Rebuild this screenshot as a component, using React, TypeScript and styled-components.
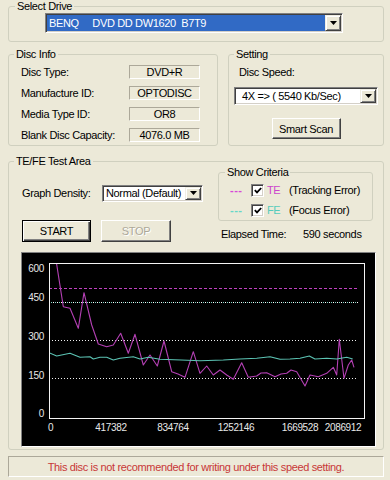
import React from "react";
import styled, { createGlobalStyle } from "styled-components";

const GlobalStyle = createGlobalStyle`
  html, body { margin: 0; padding: 0; background: #ECE9D8; }
  body { font-family: "Liberation Sans", Arial, sans-serif; font-size: 11px; color: #000; }
  * { box-sizing: border-box; }
`;

const Window = styled.div`
  width: 390px;
  height: 480px;
  padding: 0 6px 0 8px;
  display: flex;
  flex-direction: column;
  overflow: hidden;
  background: #ECE9D8;
  font-family: "Liberation Sans", Arial, sans-serif;
  font-size: 11px;
  letter-spacing: -0.35px;
  color: #000;
`;

const Group = styled.fieldset<{ $width?: number; $mt?: number }>`
  margin: ${(p) => p.$mt ?? 0}px 0 0 0;
  padding: 0;
  min-width: 0;
  border: 1px solid #D0D0BF;
  border-radius: 3px;
  ${(p) => (p.$width ? `width: ${p.$width}px; flex: none;` : "")}
`;

const GroupBody = styled.div<{ $pad: string }>`
  padding: ${(p) => p.$pad};
  display: flex;
  flex-direction: column;
`;

const Title = styled.legend<{ $indent?: number }>`
  margin-left: ${(p) => p.$indent ?? 5}px;
  padding: 0 2px;
  line-height: 13px;
  height: 13px;
  font-size: 11px;
`;

const ComboBox = styled.div<{ $w: number; $h: number }>`
  width: ${(p) => p.$w}px;
  height: ${(p) => p.$h}px;
  display: flex;
  flex: none;
  background: #fff;
  border: 1px solid;
  border-color: #808080 #fff #fff #808080;
  box-shadow: inset 1px 1px 0 #404040, inset -1px -1px 0 #D4D0C8;
  padding: 1px;
`;

const ComboText = styled.div<{ $selected?: boolean; $indent?: number }>`
  flex: 1;
  display: flex;
  align-items: center;
  padding-left: ${(p) => p.$indent ?? 2}px;
  white-space: pre;
  overflow: hidden;
  background: ${(p) => (p.$selected ? "#316AC5" : "#fff")};
  color: ${(p) => (p.$selected ? "#fff" : "#000")};
`;

const DropBtn = styled.div`
  width: 16px;
  flex: none;
  display: flex;
  align-items: center;
  justify-content: center;
  background: #ECE9D8;
  border: 1px solid;
  border-color: #F0EEE4 #404040 #404040 #F0EEE4;
  box-shadow: inset 1px 1px 0 #fff, inset -1px -1px 0 #808080;
`;

const Arrow = () => (
  <svg width="7" height="4" viewBox="0 0 7 4">
    <polygon points="0,0 7,0 3.5,4" fill="#000" />
  </svg>
);

const Combo: React.FC<{ w: number; h: number; text: string; selected?: boolean; indent?: number }> = ({
  w,
  h,
  text,
  selected,
  indent,
}) => (
  <ComboBox $w={w} $h={h}>
    <ComboText $selected={selected} $indent={indent}>
      {text}
    </ComboText>
    <DropBtn>
      <Arrow />
    </DropBtn>
  </ComboBox>
);

const Row2 = styled.div`
  display: flex;
  gap: 10px;
  margin-top: 6px;
`;

const InfoRow = styled.div`
  display: grid;
  grid-template-columns: 108px 71px;
  align-items: center;
  height: 21px;
`;

const ValueBox = styled.div`
  height: 14px;
  width: 71px;
  display: flex;
  align-items: center;
  justify-content: center;
  border: 1px solid;
  border-color: #ACA899 #fff #fff #ACA899;
`;

const Label = styled.div<{ $mt?: number; $ml?: number; $w?: number }>`
  line-height: 13px;
  margin-top: ${(p) => p.$mt ?? 0}px;
  margin-left: ${(p) => p.$ml ?? 0}px;
  ${(p) => (p.$w ? `width: ${p.$w}px; flex: none;` : "")}
  white-space: nowrap;
`;

const SpeedWrap = styled.div`
  margin-top: 8px;
`;

const Button = styled.div<{ $w: number; $h: number; $default?: boolean; $disabled?: boolean }>`
  width: ${(p) => p.$w}px;
  height: ${(p) => p.$h}px;
  flex: none;
  display: flex;
  align-items: center;
  justify-content: center;
  background: #ECE9D8;
  border: 1px solid;
  border-color: ${(p) => (p.$default ? "#000" : "#fff #404040 #404040 #fff")};
  box-shadow: ${(p) =>
    p.$default
      ? "inset 1px 1px 0 #fff, inset -1px -1px 0 #404040, inset -2px -2px 0 #808080"
      : "inset -1px -1px 0 #808080"};
  color: ${(p) => (p.$disabled ? "#ACA899" : "#000")};
  text-shadow: ${(p) => (p.$disabled ? "1px 1px 0 #fff" : "none")};
`;

const SmartScan = styled(Button)`
  margin: 13px auto 0;
`;

const TopArea = styled.div`
  display: flex;
  gap: 14px;
  padding: 0 10px 0 13px;
  height: 73px;
`;

const LeftCol = styled.div`
  flex: 1;
  display: flex;
  flex-direction: column;
`;

const DensityRow = styled.div`
  display: flex;
  align-items: center;
  margin-top: 16.5px;
`;

const ButtonRow = styled.div`
  display: flex;
  gap: 10px;
  margin-top: 18px;
`;

const RightCol = styled.div`
  width: 155px;
  flex: none;
  margin-top: -2px;
  display: flex;
  flex-direction: column;
`;

const CriteriaRow = styled.div`
  display: flex;
  align-items: center;
  height: 20px;
  padding-left: 11px;
`;

const Dashes = styled.span<{ $color: string }>`
  width: 21px;
  flex: none;
  color: ${(p) => p.$color};
  letter-spacing: 0.5px;
  font-size: 11px;
  font-weight: bold;
`;

const CheckBox = styled.span`
  width: 13px;
  height: 13px;
  flex: none;
  display: flex;
  align-items: center;
  justify-content: center;
  background: #fff;
  border: 1px solid;
  border-color: #808080 #fff #fff #808080;
  box-shadow: inset 1px 1px 0 #404040, inset -1px -1px 0 #D4D0C8;
`;

const Tag = styled.span<{ $color: string }>`
  width: 22px;
  flex: none;
  margin-left: 3px;
  color: ${(p) => p.$color};
`;

const ElapsedRow = styled.div`
  display: flex;
  margin-top: 6.5px;
  padding-left: 3px;
  line-height: 13px;
`;

const ChartPanel = styled.div`
  margin: 10.5px 7px 2.5px 12px;
  height: 195px;
  background: #000;
  border: 1px solid;
  border-color: #808080 #fff #fff #808080;
  svg {
    display: block;
  }
`;

const Status = styled.div`
  margin-top: 6px;
  height: 21px;
  display: flex;
  align-items: center;
  justify-content: center;
  color: #C83737;
  border: 1px solid;
  border-color: #ACA899 #fff #fff #ACA899;
`;

const Check = () => (
  <svg width="8" height="7" viewBox="0 0 8 7">
    <path d="M0.8 3.2 L3 5.4 L7.2 1" stroke="#000" strokeWidth="1.8" fill="none" />
  </svg>
);

const TE_PTS =
  "35,8 42.3,54.7 49,56.3 57.3,76.3 63,40.7 70.7,73 77.3,92 85.7,94.7 92.3,93 99.7,81.3 107.3,101.3 114,82.3 122.3,113 129,103 136.3,114 143,89 150.7,119.7 157,122 164,125.3 172.3,99.7 179,121.3 185.7,114 192.3,123 199,118 205.7,123 212.3,127.3 220.7,110.7 227.3,125.3 235.7,124 240,121 245.7,120.7 254,124.7 260,122 265.7,121.3 270,118 275.7,119.7 284,134 289,123 297.3,124.7 305.7,121.3 312.3,115.3 315.7,123 318.3,87.3 323,126.3 327.3,113 330.7,108 333,115.3";

const FE_PTS =
  "28,100.7 35.7,104 49,101.3 59,105.3 69,104.7 72.3,107 79,105.3 85.7,105.3 92.3,108 99,106.3 112.3,104.7 119,107 127.3,105.3 139,107.3 160,108 179,108.7 202.3,108 219,107 235.7,106.3 249,104.7 259,107.3 269,107 279,106.3 288.3,104 294,107 305.7,106.3 315.7,107 325.7,105.3 331.7,107";

const yLabels: [string, number][] = [
  ["600", 19.5],
  ["450", 48.5],
  ["300", 87.5],
  ["150", 126.5],
  ["0", 164.5],
];

const xLabels: [string, number][] = [
  ["0", 29.5],
  ["417382", 90],
  ["834764", 152],
  ["1252146", 215],
  ["1669528", 279],
  ["2086912", 322],
];

const Chart = () => (
  <svg width="352" height="193" viewBox="1 1 352 193">
    <defs>
      <clipPath id="plot">
        <rect x="28" y="11" width="316" height="156" />
      </clipPath>
    </defs>
    <line x1="28" y1="36.5" x2="337" y2="36.5" stroke="#C040C0" strokeDasharray="3 2" />
    <line x1="28" y1="50.5" x2="337" y2="50.5" stroke="#ffffff" strokeDasharray="1 3" />
    <line x1="30" y1="50.5" x2="337" y2="50.5" stroke="#7fd8c8" strokeDasharray="1 3" />
    <line x1="28" y1="88.5" x2="337" y2="88.5" stroke="#f0f0f0" strokeDasharray="1 2" />
    <line x1="28" y1="126.5" x2="337" y2="126.5" stroke="#f0f0f0" strokeDasharray="1 2" />
    <g clipPath="url(#plot)" fill="none" strokeWidth="1.1" strokeLinejoin="round">
      <polyline points={TE_PTS} stroke="#B440B4" />
      <polyline points={FE_PTS} stroke="#5CC4B4" />
    </g>
    <rect x="28.5" y="11.5" width="315" height="155" fill="none" stroke="#f4f4f4" />
    <g fill="#e8e8e8" fontSize="10" fontFamily="Liberation Sans, Arial, sans-serif">
      {yLabels.map(([t, y]) => (
        <text key={t} x="23" y={y} textAnchor="end">
          {t}
        </text>
      ))}
      {xLabels.map(([t, x]) => (
        <text key={t} x={x} y="178.6" textAnchor="middle">
          {t}
        </text>
      ))}
    </g>
  </svg>
);

const info: [string, string][] = [
  ["Disc Type:", "DVD+R"],
  ["Manufacture ID:", "OPTODISC"],
  ["Media Type ID:", "OR8"],
  ["Blank Disc Capacity:", "4076.0 MB"],
];

export default function App() {
  return (
    <>
      <GlobalStyle />
      <Window>
        <Group>
          <Title $indent={6}>Select Drive</Title>
          <GroupBody $pad="0 0 8px 36px">
            <Combo w={298} h={20} text={"BENQ     DVD DD DW1620  B7T9"} selected />
          </GroupBody>
        </Group>

        <Row2>
          <Group $width={210}>
            <Title>Disc Info</Title>
            <GroupBody $pad="0 0 0 12px">
              {info.map(([k, v]) => (
                <InfoRow key={k}>
                  <span>{k}</span>
                  <ValueBox>{v}</ValueBox>
                </InfoRow>
              ))}
            </GroupBody>
          </Group>
          <Group $width={156}>
            <Title>Setting</Title>
            <GroupBody $pad="0 5px 0 5px">
              <Label $mt={5} $ml={5}>
                Disc Speed:
              </Label>
              <SpeedWrap>
                <Combo w={144} h={18} text={"4X => ( 5540 Kb/Sec)"} indent={6} />
              </SpeedWrap>
              <SmartScan $w={69} $h={21}>
                Smart Scan
              </SmartScan>
            </GroupBody>
          </Group>
        </Row2>

        <Group $mt={9}>
          <Title>TE/FE Test Area</Title>
          <TopArea>
            <LeftCol>
              <DensityRow>
                <Label $w={80}>Graph Density:</Label>
                <Combo w={101} h={17} text="Normal (Default)" />
              </DensityRow>
              <ButtonRow>
                <Button $w={69} $h={22} $default>
                  START
                </Button>
                <Button $w={70} $h={22} $disabled>
                  STOP
                </Button>
              </ButtonRow>
            </LeftCol>
            <RightCol>
              <Group>
                <Title $indent={6}>Show Criteria</Title>
                <GroupBody $pad="1px 0 0 0">
                  <CriteriaRow>
                    <Dashes $color="#D848D8">---</Dashes>
                    <CheckBox>
                      <Check />
                    </CheckBox>
                    <Tag $color="#CC44CC">TE</Tag>
                    <span>(Tracking Error)</span>
                  </CriteriaRow>
                  <CriteriaRow>
                    <Dashes $color="#66D8C8">---</Dashes>
                    <CheckBox>
                      <Check />
                    </CheckBox>
                    <Tag $color="#55CCBC">FE</Tag>
                    <span>(Focus Error)</span>
                  </CriteriaRow>
                </GroupBody>
              </Group>
              <ElapsedRow>
                <Label $w={82}>Elapsed Time:</Label>
                <Label>590 seconds</Label>
              </ElapsedRow>
            </RightCol>
          </TopArea>
          <ChartPanel>
            <Chart />
          </ChartPanel>
        </Group>

        <Status>This disc is not recommended for writing under this speed setting.</Status>
      </Window>
    </>
  );
}
